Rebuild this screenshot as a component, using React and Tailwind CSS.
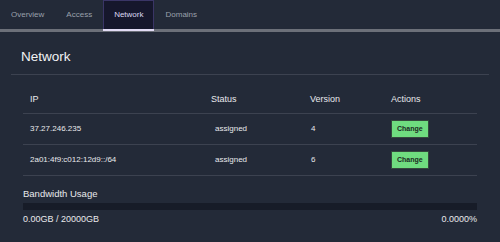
import React from 'react';

const tabs = ['Overview', 'Access', 'Network', 'Domains'];

const rows = [
  { ip: '37.27.246.235', status: 'assigned', version: '4' },
  { ip: '2a01:4f9:c012:12d9::/64', status: 'assigned', version: '6' },
];

const cols = 'grid grid-cols-[181px_99px_81px_93px]';

export default function App() {
  return (
    <div className="w-[500px] h-[242px] overflow-hidden bg-[#232a38] font-['Liberation_Sans',Arial,sans-serif]">
      {/* tabs */}
      <div className="flex h-[32px] border-b-[3px] border-[#6c7079]">
        {tabs.map((t) =>
          t === 'Network' ? (
            <div
              key={t}
              className="relative flex h-full items-center border border-b-0 border-[#3a3566] bg-[#16172c] px-[10px] text-[8px] text-[#ddd8f2]"
            >
              {t}
              <span className="absolute left-[-1px] right-[-1px] bottom-[-2px] h-[2px] bg-[#e2dcf5]" />
            </div>
          ) : (
            <div key={t} className="flex h-full items-center px-[11px] text-[8px] text-[#9aa0ab]">
              {t}
            </div>
          )
        )}
      </div>

      <div className="px-[11px]">
        <div className="flex h-[43px] items-center border-b border-[#3c4250] pl-[10px] pt-[8px] text-[13.5px] text-[#f1f2f4]">
          Network
        </div>

        <div className="px-[12px]">
          {/* table */}
          <div className="mt-[12px] text-[#e8e9ec]">
            <div className={`${cols} h-[27px] items-center border-b border-[#3c4250] text-[9px]`}>
              <div className="pl-[7px]">IP</div>
              <div className="pl-[7px]">Status</div>
              <div className="pl-[7px]">Version</div>
              <div className="pl-[7px]">Actions</div>
            </div>
            {rows.map((r) => (
              <div key={r.ip} className={`${cols} h-[31px] items-center border-b border-[#3c4250] text-[8px]`}>
                <div className="pl-[7px]">{r.ip}</div>
                <div className="pl-[11px]">{r.status}</div>
                <div className="pl-[8px]">{r.version}</div>
                <div className="pl-[7px]">
                  <button className="h-[18px] rounded-[1px] border border-[#34483c] bg-[#6fdc7f] px-[5px] text-[7px] font-bold text-[#1b2a1f]">
                    Change
                  </button>
                </div>
              </div>
            ))}
          </div>

          {/* bandwidth */}
          <div className="mt-[11px] text-[9.5px] leading-[13px] text-[#e8e9ec]">Bandwidth Usage</div>
          <div className="mt-[3px] h-[7px] bg-[#171c28]" />
          <div className="mt-[3px] flex justify-between text-[9px] leading-[13px] text-[#e8e9ec]">
            <span>0.00GB / 20000GB</span>
            <span>0.0000%</span>
          </div>
        </div>
      </div>
    </div>
  );
}
